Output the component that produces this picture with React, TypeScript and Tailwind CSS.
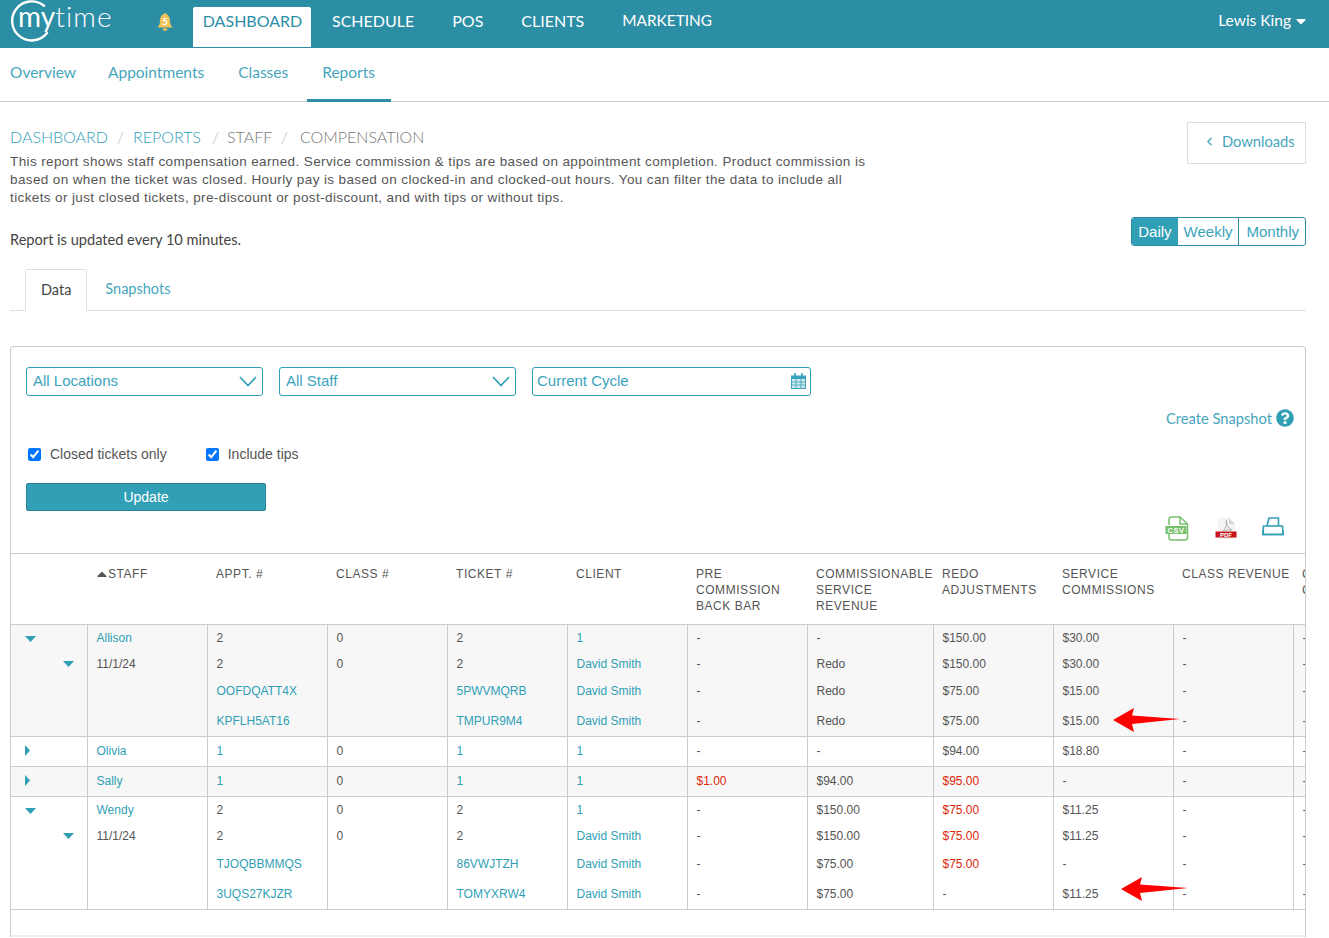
import React from 'react';
import { ChevronLeft } from 'lucide-react';
import { FaCaretDown, FaCaretUp, FaQuestionCircle } from 'react-icons/fa';

type Cell = string | { link?: string; red?: string };
type Row = { h: string; pad?: string; toggle?: 'down' | 'right'; subToggle?: boolean; shaded?: boolean; top?: boolean; cells: Cell[] };

const L = (link: string): Cell => ({ link });
const R = (red: string): Cell => ({ red });

const rows: Row[] = [
  { h: 'h-[27px]', toggle: 'down', shaded: true, top: true, cells: [L('Allison'), '2', '0', '2', L('1'), '-', '-', '$150.00', '$30.00', '-', '-'] },
  { h: 'h-[25px]', subToggle: true, shaded: true, cells: ['11/1/24', '2', '0', '2', L('David Smith'), '-', 'Redo', '$150.00', '$30.00', '-', '-'] },
  { h: 'h-[29px]', pad: 'pt-[1px]', shaded: true, cells: ['', L('OOFDQATT4X'), '', L('5PWVMQRB'), L('David Smith'), '-', 'Redo', '$75.00', '$15.00', '-', '-'] },
  { h: 'h-[31px]', shaded: true, cells: ['', L('KPFLH5AT16'), '', L('TMPUR9M4'), L('David Smith'), '-', 'Redo', '$75.00', '$15.00', '-', '-'] },
  { h: 'h-[30px]', pad: 'pb-[1px]', toggle: 'right', top: true, cells: [L('Olivia'), L('1'), '0', L('1'), L('1'), '-', '-', '$94.00', '$18.80', '-', '-'] },
  { h: 'h-[30px]', pad: 'pb-[1px]', toggle: 'right', shaded: true, top: true, cells: [L('Sally'), L('1'), '0', L('1'), L('1'), R('$1.00'), '$94.00', R('$95.00'), '-', '-', '-'] },
  { h: 'h-[27px]', toggle: 'down', top: true, cells: [L('Wendy'), '2', '0', '2', L('1'), '-', '$150.00', R('$75.00'), '$11.25', '-', '-'] },
  { h: 'h-[25px]', subToggle: true, cells: ['11/1/24', '2', '0', '2', L('David Smith'), '-', '$150.00', R('$75.00'), '$11.25', '-', '-'] },
  { h: 'h-[30px]', pad: 'pt-[1px]', cells: ['', L('TJOQBBMMQS'), '', L('86VWJTZH'), L('David Smith'), '-', '$75.00', R('$75.00'), '-', '-', '-'] },
  { h: 'h-[31px]', cells: ['', L('3UQS27KJZR'), '', L('TOMYXRW4'), L('David Smith'), '-', '$75.00', '-', '$11.25', '-', '-'] },
];

const headers = ['STAFF', 'APPT. #', 'CLASS #', 'TICKET #', 'CLIENT', 'PRE COMMISSION BACK BAR', 'COMMISSIONABLE SERVICE REVENUE', 'REDO ADJUSTMENTS', 'SERVICE COMMISSIONS', 'CLASS REVENUE', 'CLASS COMMISSIONS'];
const widths = ['w-[76px]', 'w-[120px]', 'w-[120px]', 'w-[120px]', 'w-[120px]', 'w-[120px]', 'w-[120px]', 'w-[126px]', 'w-[120px]', 'w-[120px]', 'w-[120px]', 'w-[120px]'];

const Logo = () => (
  <div className="relative h-12 w-[130px] shrink-0">
    <svg className="absolute left-[11px] top-0" width="42" height="44" viewBox="0 0 42 44" fill="none">
      <path d="M33 5.800A19.500 19.500 0 1 0 36 33" stroke="#fff" strokeWidth="2.400" strokeLinecap="round" />
    </svg>
    <span className="absolute left-[18px] top-[-1px] font-['Lato',sans-serif] text-[28px] leading-[34px] text-white">
      <span className="font-normal">my</span>
      <span className="font-light tracking-[1.2px]">time</span>
    </span>
  </div>
);

const Bell = () => (
  <svg width="18" height="20" viewBox="0 0 18 20" className="shrink-0">
    <circle cx="9" cy="2.500" r="1.500" fill="#f0c35b" />
    <path d="M9 2C13 2 14 6 14 9C14 12 15 13.500 16.500 15.500H1.500C3 13.500 4 12 4 9C4 6 5 2 9 2Z" fill="#f0c35b" />
    <path d="M6.500 16.500H11.500C11.300 18 10.300 19 9 19C7.700 19 6.700 18 6.500 16.500Z" fill="#f0c35b" />
    <text x="9" y="12.500" textAnchor="middle" fontSize="9.500" fontWeight="700" fill="#fff" fontFamily="Lato, sans-serif">5</text>
  </svg>
);

const CsvIcon = () => (
  <svg width="24" height="25" viewBox="0 0 24 25" fill="none">
    <path d="M4 9V3.500C4 2 5 1 6.500 1H15L22.500 8V21.500C22.500 23 21.500 24 20 24H6.500C5 24 4 23 4 21.500V18" stroke="#77c06d" strokeWidth="1.500" />
    <path d="M15 1V8H22.500" stroke="#77c06d" strokeWidth="1.500" />
    <rect x="0.500" y="10" width="21" height="8" fill="#77c06d" />
    <text x="11" y="16.800" textAnchor="middle" fontSize="7.500" fontWeight="700" letterSpacing="0.600" fill="#fff" fontFamily="Liberation Sans, sans-serif">CSV</text>
  </svg>
);

const PdfIcon = () => (
  <svg width="22" height="23" viewBox="0 0 22 23" fill="none">
    <path d="M3 1H14L20 7V22H3Z" fill="#f4f4f4" />
    <path d="M14 1V7H20Z" fill="#d5d5d5" />
    <path d="M8 14C11 11 12 7 11.500 3.500C10.500 6 12.500 11 17 13C13 12.500 10 13 8 14Z" stroke="#a0a0a0" strokeWidth="0.800" />
    <rect x="0.500" y="14.500" width="21" height="6" fill="#c8141a" />
    <text x="11" y="19.800" textAnchor="middle" fontSize="6" fontWeight="700" fill="#fff" fontFamily="Liberation Sans, sans-serif">PDF</text>
  </svg>
);

const PrintIcon = () => (
  <svg width="22" height="19" viewBox="0 0 22 19" fill="none" stroke="#2f9fb5" strokeWidth="1.600">
    <path d="M5 9L7 1H16.500V9" />
    <path d="M5 9H1.500L1 17.500H21L20.500 9H16.500" />
    <path d="M1 13.500V17.500H21V13.500" />
    <path d="M5 9H16.500" />
  </svg>
);

const CalendarIcon = () => (
  <svg width="15" height="16" viewBox="0 0 15 16" fill="none">
    <rect x="0.500" y="3" width="14" height="12.500" fill="#cfe8ee" stroke="#3aa3bb" />
    <rect x="0.500" y="3" width="14" height="3" fill="#3aa3bb" />
    <path d="M5 6V15M10 6V15M1 9H14M1 12H14" stroke="#3aa3bb" strokeWidth="0.800" />
    <path d="M4 1V4M11 1V4" stroke="#3aa3bb" strokeWidth="1.800" strokeLinecap="round" />
  </svg>
);

const WideChevron = () => (
  <svg className="mr-[1px]" width="18" height="11" viewBox="0 0 18 11" fill="none" stroke="#2f9fb5" strokeWidth="1.700">
    <path d="M1 1L9 9.500L17 1" />
  </svg>
);

const Arrow = ({ className }: { className: string }) => (
  <svg className={className} width="68" height="24" viewBox="0 0 68 24">
    <path d="M0 12L21 0L19 7.500L67 11L19 16L21 24Z" fill="#fe0000" />
  </svg>
);

const DownTri = ({ className }: { className: string }) => (
  <svg className={className} width="11" height="6" viewBox="0 0 11 6"><path d="M0 0H11L5.500 6Z" fill="#2f9fb5" /></svg>
);

const FilterBox = ({ label, width, icon }: { label: string; width: string; icon: React.ReactNode }) => (
  <div className={`flex h-[29px] items-center justify-between rounded-[3px] border border-[#2f9fb5] pr-[4px] text-[15px] text-[#3aa3bb] ${width}`}>
    <span>{label}</span>
    {icon}
  </div>
);

const CellText = ({ cell }: { cell: Cell }) => {
  if (typeof cell === 'string') return <>{cell}</>;
  if (cell.link) return <span className="text-[#2f9fb5]">{cell.link}</span>;
  return <span className="text-[#e0260c]">{cell.red}</span>;
};

export default function App() {
  return (
    <div className="h-[938px] overflow-hidden bg-white font-['Liberation_Sans',sans-serif] text-[#555]">
      {/* Top bar */}
      <header className="flex h-12 items-center bg-[#2c8ea5] pr-[20px] font-['Lato',sans-serif] text-[16px] text-white">
        <Logo />
        <div className="ml-[26px] mt-[-4px]"><Bell /></div>
        <div className="ml-[19px] mt-[6px] flex h-10 w-[118px] items-center justify-center rounded-t-[2px] bg-white text-[#2c8ea5]">
          <span className="mt-[-12px] pl-[1px]">DASHBOARD</span>
        </div>
        <nav className="mt-[-6px] flex items-center gap-[38px] pl-[21px]">
          <span>SCHEDULE</span>
          <span>POS</span>
          <span>CLIENTS</span>
          <span className="text-[15.400px]">MARKETING</span>
        </nav>
        <div className="ml-auto mt-[-6px] flex items-center gap-[2px] text-[15.500px]">
          <span>Lewis King</span>
          <FaCaretDown size={16} />
        </div>
      </header>

      {/* Sub nav */}
      <nav className="flex h-[54px] items-stretch border-b border-[#ccc] font-['Lato',sans-serif] text-[15.500px] text-[#45a6bc]">
        <span className="ml-[10px] pt-[13px]">Overview</span>
        <span className="ml-[32px] pt-[13px]">Appointments</span>
        <span className="ml-[34px] pt-[13px]">Classes</span>
        <span className="ml-[19px] h-[54px] border-b-[3px] border-[#2c8ea5] px-[15px] pt-[13px] pr-[16px]">Reports</span>
      </nav>

      <div className="pl-[10px] pr-[23px]">
        {/* Title block */}
        <div className="flex justify-between">
          <div>
            <div className="mt-[25px] flex h-5 items-center font-['Lato',sans-serif] text-[16px] font-light text-[#2f9fb5]">
              <span className="w-[107px]">DASHBOARD</span>
              <span className="w-[16px] text-[#bbb]">/</span>
              <span className="w-[79px]">REPORTS</span>
              <span className="w-[15px] text-[#bbb]">/</span>
              <span className="w-[54px] text-[#777]">STAFF</span>
              <span className="w-[19px] text-[#bbb]">/</span>
              <span className="text-[#777]">COMPENSATION</span>
            </div>
            <p className="mt-[6px] w-[870px] text-[13.500px] leading-[18px] tracking-[0.38px] text-[#555]">
              This report shows staff compensation earned. Service commission &amp; tips are based on appointment completion. Product commission is based on when the ticket was closed. Hourly pay is based on clocked-in and clocked-out hours. You can filter the data to include all tickets or just closed tickets, pre-discount or post-discount, and with tips or without tips.
            </p>
          </div>
          <div className="mt-5 flex h-[42px] w-[119px] items-center gap-[6px] border border-[#ddd] pb-[3px] pl-[15px] font-['Lato',sans-serif] text-[14.700px] text-[#45a6bc]">
            <ChevronLeft size={13} strokeWidth={2.500} />
            <span>Downloads</span>
          </div>
        </div>

        <div className="mt-[10px] flex items-start justify-between">
          <div className="mt-[12px] font-['Lato',sans-serif] text-[14.600px] text-[#444]">Report is updated every 10 minutes.</div>
          <div className="flex h-[29px] overflow-hidden rounded-[3px] border border-[#2c8ea5] text-[15px] leading-[27px] text-[#3aa3bb]">
            <span className="bg-[#319fb5] px-[6px] text-white">Daily</span>
            <span className="px-[6px]">Weekly</span>
            <span className="border-l border-[#2c8ea5] pl-[7px] pr-[6px]">Monthly</span>
          </div>
        </div>

        {/* Tabs */}
        <div className="mt-[18px] flex h-[42px] border-b border-[#ddd] pl-[15px] font-['Lato',sans-serif] text-[14.500px]">
          <span className="h-[42px] rounded-t-[2px] border border-b-0 border-[#ddd] bg-white px-[15px] pt-[9px] text-[#444]">Data</span>
          <span className="px-[18px] pt-[9px] text-[#45a6bc]">Snapshots</span>
        </div>

        {/* Report card */}
        <section className="relative mt-[35px] rounded-t-[4px] border border-b-0 border-[#ccc]">
          <div className="flex gap-4 pl-[15px] pt-5">
            <FilterBox label="All Locations" width="w-[237px] pl-[6px]" icon={<WideChevron />} />
            <FilterBox label="All Staff" width="w-[237px] pl-[6px]" icon={<WideChevron />} />
            <FilterBox label="Current Cycle" width="w-[279px] pl-[4px]" icon={<CalendarIcon />} />
          </div>
          <div className="mt-[11px] flex items-center justify-end gap-1 pr-[11px] font-['Lato',sans-serif] text-[14.700px] text-[#45a6bc]">
            <span>Create Snapshot</span>
            <FaQuestionCircle size={18} className="text-[#2f9fb5]" />
          </div>
          <div className="mt-[15px] flex items-center pl-[17px] text-[14px]">
            <input type="checkbox" defaultChecked className="mr-[9px] size-[13px]" />
            <span>Closed tickets only</span>
            <input type="checkbox" defaultChecked className="ml-[39px] mr-[9px] size-[13px]" />
            <span>Include tips</span>
          </div>
          <div className="ml-[15px] mt-[18px] flex h-[28px] w-[240px] items-center justify-center rounded-[2px] border border-[#2c8397] bg-[#319fb5] pt-[1px] text-[14px] text-white">Update</div>
          <div className="mt-[4px] flex h-[28px] items-center justify-end pr-[21px]">
            <CsvIcon />
            <div className="ml-[26px]"><PdfIcon /></div>
            <div className="ml-[25px] mt-[-4px]"><PrintIcon /></div>
          </div>

          {/* Table */}
          <div className="relative mt-[10px] overflow-hidden">
            <table className="w-[1402px] table-fixed border-collapse text-[12px] text-[#555]">
              <colgroup>
                {widths.map((w, i) => <col key={i} className={w} />)}
              </colgroup>
              <thead>
                <tr className="h-[71px] border-y border-[#ccc]">
                  <th />
                  {headers.map((h, i) => (
                    <th key={h} className="pl-[9px] pr-2 pt-[12px] align-top text-left text-[12px] font-normal leading-[16px] tracking-[0.55px]">
                      <span className={i === 6 || i === 9 ? 'block w-[118px]' : 'block w-[105px]'}>
                        {i === 0 && <FaCaretUp size={16} className="ml-[-2px] mr-[-2px] inline-block align-[-4px]" />}
                        {h}
                      </span>
                    </th>
                  ))}
                </tr>
              </thead>
              <tbody>
                {rows.map((r, i) => (
                  <tr key={i} className={`${r.h} ${r.shaded ? 'bg-[#f7f7f7]' : 'bg-white'} ${r.top ? 'border-t border-[#ccc]' : ''}`}>
                    <td className="relative p-0">
                      {r.toggle === 'down' && <DownTri className="absolute left-[14px] top-[11px]" />}
                      {r.toggle === 'right' && (
                        <svg className="absolute left-[14px] top-[8px]" width="5" height="11" viewBox="0 0 5 11"><path d="M0 0L5 5.500L0 11Z" fill="#2f9fb5" /></svg>
                      )}
                      {r.subToggle && <DownTri className="absolute left-[52px] top-[10px]" />}
                    </td>
                    {r.cells.map((c, j) => (
                      <td key={j} className={`border-l border-[#ccc] pl-[9px] pr-2 ${r.pad ?? ''}`}>
                        <CellText cell={c} />
                      </td>
                    ))}
                  </tr>
                ))}
                <tr className="h-[26px] border-t border-[#ccc]"><td colSpan={12} /></tr>
              </tbody>
            </table>
            <div className="h-[2px] bg-[#eee]" />
            <Arrow className="absolute left-[1102px] top-[155px]" />
            <Arrow className="absolute left-[1110px] top-[324px]" />
          </div>
        </section>
      </div>
    </div>
  );
}
